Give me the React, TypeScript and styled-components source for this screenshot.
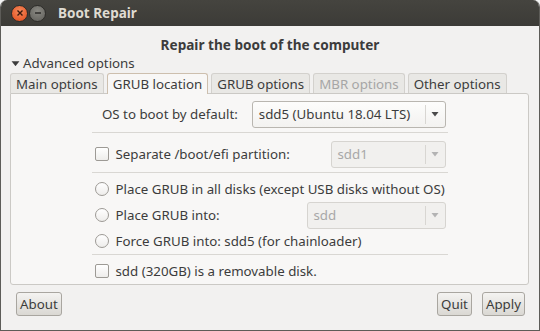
import React from "react";
import styled, { createGlobalStyle } from "styled-components";

const Global = createGlobalStyle`
  html, body { margin: 0; padding: 0; background: #f4f4f4; }
  body {
    font-family: "Noto Sans", "DejaVu Sans", sans-serif;
    font-size: 13.3px;
    color: #3c3c3c;
  }
`;

const Window = styled.div`
  width: 540px;
  height: 331px;
  box-sizing: border-box;
  display: flex;
  flex-direction: column;
  border: 1px solid #5d5c58;
  border-top: none;
  border-radius: 7px 7px 0 0;
  overflow: hidden;
  background: #f2f1f0;
`;

const TitleBar = styled.div`
  height: 26px;
  flex: none;
  display: flex;
  align-items: center;
  padding-left: 10px;
  gap: 1px;
  background: linear-gradient(#45443f, #3c3b37);
  color: #dfdbd2;
  font-weight: bold;
  font-size: 13.5px;
`;

const WinButton = styled.div<{ $kind: "close" | "min" }>`
  width: 15px;
  height: 15px;
  border-radius: 50%;
  display: flex;
  align-items: center;
  justify-content: center;
  background: ${(p) =>
    p.$kind === "close"
      ? "radial-gradient(circle at 50% 35%, #f58a5c, #df4a1a)"
      : "radial-gradient(circle at 50% 35%, #8a8983, #5f5e59)"};
  border: 1px solid #2e2d2a;
`;

const Title = styled.span`
  margin-left: 11px;
`;

const Body = styled.div`
  flex: 1;
  display: flex;
  flex-direction: column;
  padding: 0 9px;
`;

const Heading = styled.div`
  text-align: center;
  font-weight: bold;
  font-size: 13.6px;
  margin-top: 10px;
  line-height: 18px;
`;

const Expander = styled.div`
  display: flex;
  align-items: center;
  gap: 3px;
  line-height: 16px;
  margin-top: 1px;
  padding-left: 1px;
`;

const TabRow = styled.div`
  display: flex;
  align-items: flex-end;
  height: 20px;
  margin-top: 2px;
  gap: 3px;
`;

const Tab = styled.div<{ $active?: boolean; $disabled?: boolean }>`
  height: ${(p) => (p.$active ? "21px" : "20px")};
  box-sizing: border-box;
  padding: 0 5px;
  display: flex;
  align-items: center;
  border: 1px solid ${(p) => (p.$active ? "#cdbfae" : "#d3d1cd")};
  border-bottom: none;
  border-radius: 3px 3px 0 0;
  background: ${(p) => (p.$active ? "#f8f7f6" : "#e9e8e5")};
  color: ${(p) => (p.$disabled ? "#a6a6a6" : "#3c3c3c")};
  margin-bottom: ${(p) => (p.$active ? "-1px" : "0")};
  position: relative;
  z-index: ${(p) => (p.$active ? 2 : 0)};
`;

const Panel = styled.div`
  height: 192px;
  box-sizing: border-box;
  border: 1px solid #cbc9c5;
  border-radius: 0 3px 3px 3px;
  background: #f8f7f6;
  display: flex;
  justify-content: center;
  width: 519px;
  padding-top: 5px;
`;

const Column = styled.div`
  width: 356px;
  display: flex;
  flex-direction: column;
`;

const Row = styled.div<{ $h: number }>`
  height: ${(p) => p.$h}px;
  display: flex;
  align-items: center;
  gap: 7px;
  padding-left: 3px;
`;

const Label = styled.span<{ $w?: number }>`
  white-space: nowrap;
  ${(p) => (p.$w ? `width: ${p.$w}px; text-align: right;` : "")}
`;

const Spacer = styled.div`
  flex: 1;
`;

const Separator = styled.div`
  height: 1px;
  background: #d9d7d3;
  margin: 3px 0 6px;
`;

const Combo = styled.div<{ $w: number; $disabled?: boolean }>`
  width: ${(p) => p.$w}px;
  height: 27px;
  box-sizing: border-box;
  display: flex;
  align-items: center;
  border: 1px solid ${(p) => (p.$disabled ? "#d6d4d0" : "#b9b6b0")};
  border-radius: 3px;
  background: ${(p) => (p.$disabled ? "#f1f0ee" : "linear-gradient(#fdfdfc, #f3f2f0)")};
  color: ${(p) => (p.$disabled ? "#a8a8a8" : "#3c3c3c")};
  margin-right: 2px;
`;

const ComboText = styled.span`
  flex: 1;
  padding-left: 6px;
  white-space: nowrap;
`;

const ComboArrow = styled.div<{ $disabled?: boolean }>`
  width: 19px;
  height: 19px;
  border-left: 1px solid #d8d6d2;
  display: flex;
  align-items: center;
  justify-content: center;
  color: ${(p) => (p.$disabled ? "#b3b3b3" : "#4a4a4a")};
`;

const Check = styled.div`
  width: 12px;
  height: 12px;
  border: 1px solid #9d9a95;
  border-radius: 2px;
  background: linear-gradient(#ffffff, #eeedeb);
  flex: none;
`;

const Radio = styled.div`
  width: 12px;
  height: 12px;
  border: 1px solid #9d9a95;
  border-radius: 50%;
  background: linear-gradient(#ffffff, #eeedeb);
  flex: none;
`;

const Footer = styled.div`
  display: flex;
  align-items: center;
  padding: 7px 5px 0 6px;
  gap: 10px;
`;

const Button = styled.div`
  height: 24px;
  box-sizing: border-box;
  padding: 0 3px;
  display: flex;
  align-items: center;
  border: 1px solid #a9a6a0;
  border-radius: 3px;
  background: linear-gradient(#f4f3f1, #dad8d3);
`;

const Arrow = ({ color, w = 8 }: { color?: string; w?: number }) => (
  <svg width={w} height={w * 0.75} viewBox="0 0 8 6">
    <path d="M0.5 1 L7.5 1 L4 5.5 Z" fill={color || "currentColor"} />
  </svg>
);

export default function App() {
  return (
    <>
      <Global />
      <Window>
        <TitleBar>
          <WinButton $kind="close">
            <svg width="8" height="8" viewBox="0 0 8 8">
              <path d="M1.5 1.5 L6.5 6.5 M6.5 1.5 L1.5 6.5" stroke="#3a1a0e" strokeWidth="1.4" />
            </svg>
          </WinButton>
          <WinButton $kind="min">
            <svg width="8" height="8" viewBox="0 0 8 8">
              <path d="M1 4 L7 4" stroke="#2e2d2a" strokeWidth="1.6" />
            </svg>
          </WinButton>
          <Title>Boot Repair</Title>
        </TitleBar>
        <Body>
          <Heading>Repair the boot of the computer</Heading>
          <Expander>
            <Arrow color="#3c3c3c" w={9} />
            <span>Advanced options</span>
          </Expander>
          <TabRow>
            <Tab>Main options</Tab>
            <Tab $active>GRUB location</Tab>
            <Tab>GRUB options</Tab>
            <Tab $disabled>MBR options</Tab>
            <Tab>Other options</Tab>
          </TabRow>
          <Panel>
            <Column>
              <Row $h={30}>
                <Label $w={145}>OS to boot by default:</Label>
                <Spacer />
                <Combo $w={196}>
                  <ComboText>sdd5 (Ubuntu 18.04 LTS)</ComboText>
                  <ComboArrow>
                    <Arrow />
                  </ComboArrow>
                </Combo>
              </Row>
              <Separator />
              <Row $h={30}>
                <Check />
                <Label>Separate /boot/efi partition:</Label>
                <Spacer />
                <Combo $w={115} $disabled>
                  <ComboText>sdd1</ComboText>
                  <ComboArrow $disabled>
                    <Arrow />
                  </ComboArrow>
                </Combo>
              </Row>
              <Separator />
              <Row $h={20}>
                <Radio />
                <Label>Place GRUB in all disks (except USB disks without OS)</Label>
              </Row>
              <Row $h={32}>
                <Radio />
                <Label>Place GRUB into:</Label>
                <Spacer />
                <Combo $w={139} $disabled>
                  <ComboText>sdd</ComboText>
                  <ComboArrow $disabled>
                    <Arrow />
                  </ComboArrow>
                </Combo>
              </Row>
              <Row $h={20}>
                <Radio />
                <Label>Force GRUB into: sdd5 (for chainloader)</Label>
              </Row>
              <Separator />
              <Row $h={20}>
                <Check />
                <Label>sdd (320GB) is a removable disk.</Label>
              </Row>
            </Column>
          </Panel>
          <Footer>
            <Button>About</Button>
            <Spacer />
            <Button>Quit</Button>
            <Button>Apply</Button>
          </Footer>
        </Body>
      </Window>
    </>
  );
}
